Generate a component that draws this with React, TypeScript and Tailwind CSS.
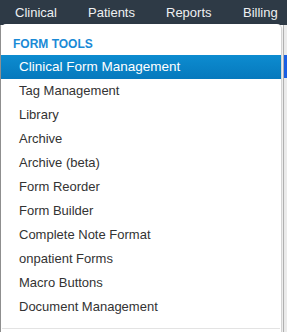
const navItems = [
  { label: "Clinical", w: "w-[73px]" },
  { label: "Patients", w: "w-[78px]" },
  { label: "Reports", w: "w-[77px]" },
  { label: "Billing", w: "w-auto" },
];

const formTools = [
  "Tag Management",
  "Library",
  "Archive",
  "Archive (beta)",
  "Form Reorder",
  "Form Builder",
  "Complete Note Format",
  "onpatient Forms",
  "Macro Buttons",
  "Document Management",
];

export default function App() {
  return (
    <div
      className="relative h-[332px] w-[287px] overflow-hidden bg-[#f3f3f3] flex flex-col"
      style={{ fontFamily: '"Liberation Sans", Arial, sans-serif' }}
    >
      {/* top navigation */}
      <div className="h-[25px] shrink-0 bg-[#2e3a46] flex items-center pl-[15px] text-[13px] text-[#eef0f2] whitespace-nowrap">
        {navItems.map((item) => (
          <span key={item.label} className={`${item.w} shrink-0`}>
            {item.label}
          </span>
        ))}
      </div>

      {/* page behind the menu */}
      <div className="flex-1 flex">
        <div className="w-px bg-[#9a9a9a]" />
        <div className="flex-1 bg-white" />
        <div className="w-[4px] border-l border-[#b5b5b5] bg-[#ebebeb] pt-[30px]">
          <div className="h-[23px] bg-[#1b5fe3]" />
        </div>
      </div>

      {/* dropdown */}
      <div className="absolute left-px top-[24px] w-[281px] h-[320px] bg-white rounded-t-[5px] border-r border-[#d4d4d4] shadow-[0_1px_3px_rgba(0,0,0,0.2)] pt-[11px]">
        <div className="h-[18px] leading-[18px] pl-[12px] text-[12px] font-bold text-[#1a8ad6] mb-[2px]">
          FORM TOOLS
        </div>
        <div className="h-6 leading-6 px-[18px] text-[13.5px] text-white bg-gradient-to-b from-[#0d8cd0] to-[#0679bd]">
          Clinical Form Management
        </div>
        {formTools.map((t) => (
          <div key={t} className="h-6 leading-6 px-[18px] text-[13px] text-[#333333]">
            {t}
          </div>
        ))}
        <div className="mt-[9px] mx-px border-t border-[#e3e3e3]" />
      </div>
    </div>
  );
}
